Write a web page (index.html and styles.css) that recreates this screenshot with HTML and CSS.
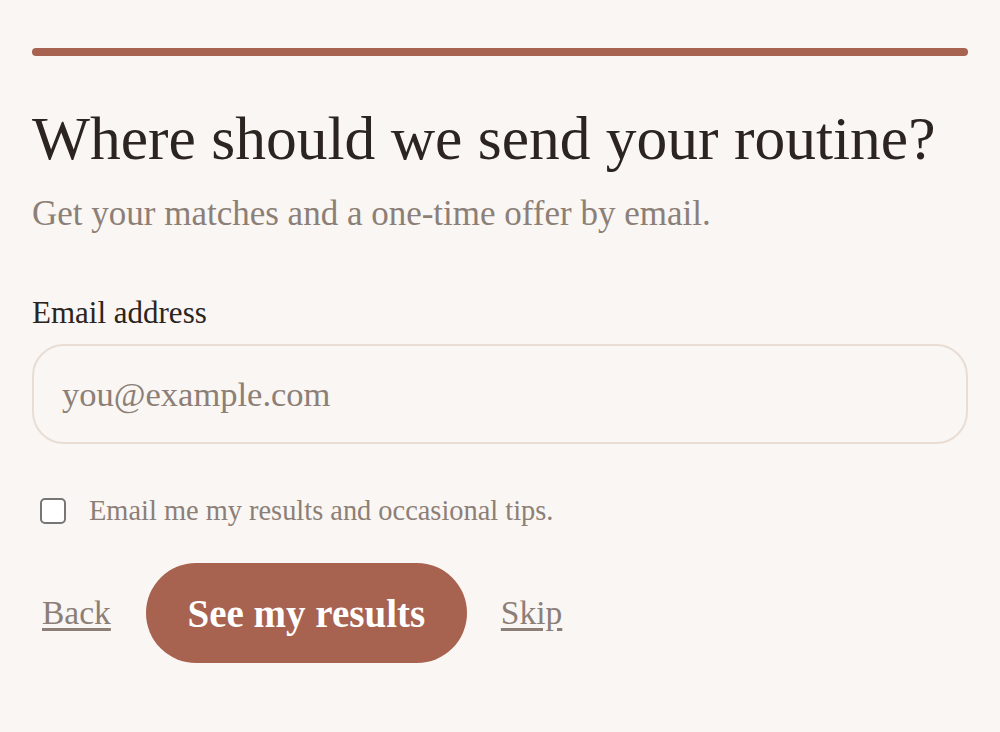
FILE: index.html
```html
<!DOCTYPE html>
<html lang="en">
<head>
<meta charset="utf-8">
<title>Where should we send your routine?</title>
<link rel="stylesheet" href="styles.css">
</head>
<body>
<main class="page">
  <div class="progress"><div class="progress-fill"></div></div>
  <h1 class="title">Where should we send your routine?</h1>
  <p class="subtitle">Get your matches and a one-time offer by email.</p>
  <label class="field-label" for="email">Email address</label>
  <input class="field-input" id="email" type="email" placeholder="you@example.com">
  <label class="consent">
    <input class="consent-box" type="checkbox">
    <span class="consent-text">Email me my results and occasional tips.</span>
  </label>
  <div class="actions">
    <a class="link" href="#">Back</a>
    <button class="primary" type="button">See my results</button>
    <a class="link" href="#">Skip</a>
  </div>
</main>
</body>
</html>
```
FILE: styles.css
```css
html, body {
  margin: 0;
  padding: 0;
  background: #faf6f3;
}
body {
  font-family: "Liberation Serif", "DejaVu Serif", serif;
  color: #2b2420;
}
.page {
  display: flex;
  flex-direction: column;
  align-items: flex-start;
  padding: 48px 32px 0;
}
.progress {
  align-self: stretch;
  height: 8px;
  border-radius: 4px;
  background: #e8ddd4;
  overflow: hidden;
}
.progress-fill {
  width: 100%;
  height: 100%;
  background: #a86250;
}
.title {
  margin: 46px 0 0;
  font-size: 61.5px;
  line-height: 72px;
  font-weight: 400;
  color: #2b2420;
}
.subtitle {
  margin: 20px 0 0;
  font-size: 35px;
  line-height: 40px;
  color: #8c7f77;
}
.field-label {
  margin-top: 61px;
  font-size: 31px;
  line-height: 36px;
  color: #2b2420;
}
.field-input {
  align-self: stretch;
  box-sizing: border-box;
  margin: 13px 0 0;
  height: 100px;
  padding: 0 28px;
  border: 2px solid #e8ddd4;
  border-radius: 32px;
  background: #faf6f3;
  font-family: inherit;
  font-size: 34.5px;
  color: #2b2420;
  outline: none;
}
.field-input::placeholder {
  color: #8c7f77;
}
.consent {
  display: flex;
  align-items: center;
  gap: 23px;
  margin: 49px 0 0 8px;
}
.consent-box {
  appearance: none;
  -webkit-appearance: none;
  box-sizing: border-box;
  width: 26px;
  height: 26px;
  margin: 0;
  border: 2.5px solid #767676;
  border-radius: 5px;
  background: #ffffff;
}
.consent-text {
  font-size: 28.4px;
  line-height: 36px;
  color: #8c7f77;
}
.actions {
  display: flex;
  align-items: center;
  margin: 34px 0 0 10px;
}
.link {
  font-size: 33.5px;
  color: #8c7f77;
  text-decoration: underline;
  text-underline-offset: 4px;
}
.primary {
  margin: 0 34px 0 35px;
  width: 321px;
  height: 100px;
  border: 0;
  border-radius: 50px;
  background: #a86250;
  color: #ffffff;
  font-family: inherit;
  font-size: 39px;
  font-weight: 700;
  cursor: pointer;
}
```
